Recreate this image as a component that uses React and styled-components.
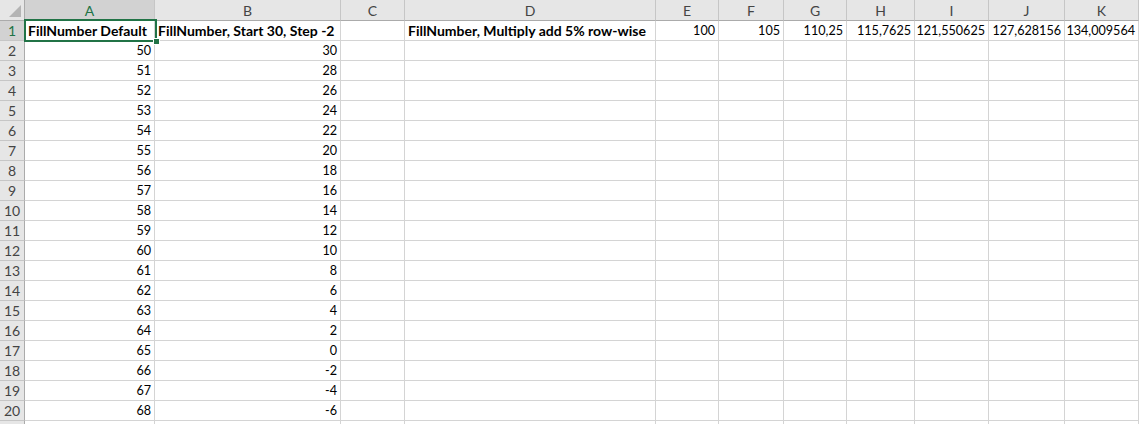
import React from "react";
import styled, { createGlobalStyle } from "styled-components";

const GlobalStyle = createGlobalStyle`
  html, body {
    margin: 0;
    padding: 0;
    background: #ffffff;
    overflow: hidden;
  }
  body {
    font-family: Lato, "Open Sans", sans-serif;
  }
`;

const COLUMNS = [
  { key: "A", width: 130 },
  { key: "B", width: 186 },
  { key: "C", width: 64 },
  { key: "D", width: 251 },
  { key: "E", width: 63 },
  { key: "F", width: 65 },
  { key: "G", width: 63 },
  { key: "H", width: 68 },
  { key: "I", width: 74 },
  { key: "J", width: 76 },
  { key: "K", width: 74 },
];

const ROW_HEADER_WIDTH = 25;
const COL_HEADER_HEIGHT = 21;
const ROW_HEIGHT = 20;
const LAST_NUMBERED_ROW = 20;

const Sheet = styled.div`
  position: relative;
  display: grid;
  grid-template-columns: ${ROW_HEADER_WIDTH}px ${COLUMNS.map((c) => `${c.width}px`).join(" ")} 1fr;
  grid-template-rows: ${COL_HEADER_HEIGHT}px;
  grid-auto-rows: ${ROW_HEIGHT}px;
  width: 1139px;
  height: 424px;
  overflow: hidden;
  background: #ffffff;
`;

const Corner = styled.div`
  position: relative;
  box-sizing: border-box;
  background: #e6e6e6;
  border-right: 1px solid #ababab;
  border-bottom: 1px solid #ababab;
  &::after {
    content: "";
    position: absolute;
    right: 3px;
    bottom: 3px;
    width: 0;
    height: 0;
    border-style: solid;
    border-width: 0 0 12px 12px;
    border-color: transparent transparent #b4b4b4 transparent;
  }
`;

const ColHeader = styled.div`
  box-sizing: border-box;
  display: flex;
  align-items: center;
  justify-content: center;
  background: ${(p) => (p.$active ? "#d2d2d2" : "#e6e6e6")};
  color: ${(p) => (p.$active ? "#217346" : "#444444")};
  border-right: 1px solid #c6c6c6;
  border-bottom: 1px solid #ababab;
  font-size: 14px;
  padding-top: 1px;
`;

const RowHeader = styled.div`
  box-sizing: border-box;
  display: flex;
  align-items: center;
  justify-content: center;
  background: ${(p) => (p.$active ? "#d2d2d2" : "#e6e6e6")};
  color: ${(p) => (p.$active ? "#217346" : "#444444")};
  border-right: 1px solid #ababab;
  border-bottom: 1px solid #c6c6c6;
  font-size: 14px;
`;

const Cell = styled.div`
  box-sizing: border-box;
  display: flex;
  align-items: flex-end;
  justify-content: ${(p) => (p.$numeric ? "flex-end" : "flex-start")};
  padding: 0 3px 1px 3px;
  border-right: 1px solid #d4d4d4;
  border-bottom: 1px solid #d4d4d4;
  color: #000000;
  font-size: ${(p) => (p.$bold ? "14px" : "12.6px")};
  font-weight: ${(p) => (p.$bold ? 700 : 400)};
  white-space: nowrap;
  line-height: 17px;
  position: relative;
  z-index: ${(p) => (p.$spill ? 1 : 0)};
`;

const Selection = styled.div`
  position: absolute;
  left: 24px;
  top: 19px;
  width: 133px;
  height: 23px;
  box-sizing: border-box;
  border: 2px solid #217346;
  pointer-events: none;
  z-index: 2;
`;

const FillHandle = styled.div`
  position: absolute;
  right: -5px;
  bottom: -5px;
  width: 5px;
  height: 5px;
  background: #217346;
  border: 1px solid #ffffff;
`;

const headerRow = {
  A: { text: "FillNumber Default", bold: true },
  B: { text: "FillNumber, Start 30, Step -2", bold: true },
  D: { text: "FillNumber, Multiply add 5% row-wise", bold: true },
  E: { text: "100", numeric: true },
  F: { text: "105", numeric: true },
  G: { text: "110,25", numeric: true },
  H: { text: "115,7625", numeric: true },
  I: { text: "121,550625", numeric: true },
  J: { text: "127,628156", numeric: true },
  K: { text: "134,009564", numeric: true },
};

function rowData(r) {
  if (r === 1) return headerRow;
  if (r > LAST_NUMBERED_ROW) return {};
  return {
    A: { text: String(48 + r), numeric: true },
    B: { text: String(30 - 2 * (r - 2)), numeric: true },
  };
}

const ROWS = Array.from({ length: 21 }, (_, i) => i + 1);

export default function App() {
  return (
    <>
      <GlobalStyle />
      <Sheet>
        <Corner />
        {COLUMNS.map((c) => (
          <ColHeader key={c.key} $active={c.key === "A"}>
            {c.key}
          </ColHeader>
        ))}
        <ColHeader />
        {ROWS.map((r) => {
          const data = rowData(r);
          return (
            <React.Fragment key={r}>
              <RowHeader $active={r === 1}>
                {r <= LAST_NUMBERED_ROW ? r : ""}
              </RowHeader>
              {COLUMNS.map((c) => {
                const d = data[c.key];
                return (
                  <Cell
                    key={c.key}
                    $numeric={d && d.numeric}
                    $bold={d && d.bold}
                    $spill={!!d}
                  >
                    {d ? d.text : ""}
                  </Cell>
                );
              })}
              <Cell />
            </React.Fragment>
          );
        })}
        <Selection>
          <FillHandle />
        </Selection>
      </Sheet>
    </>
  );
}
